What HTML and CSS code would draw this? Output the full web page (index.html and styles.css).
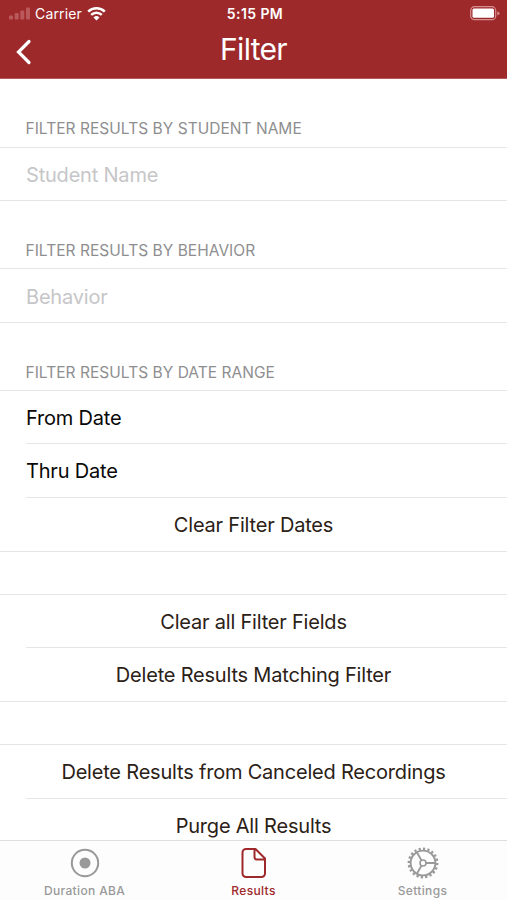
FILE: index.html
```html
<!DOCTYPE html>
<html lang="en">
<head>
<meta charset="utf-8">
<title>Filter</title>
<link rel="stylesheet" href="styles.css">
</head>
<body>
<div class="app">
  <header class="top">
    <div class="status">
      <div class="carrier">
        <svg class="signal" width="22" height="13" viewBox="0 0 22 13"><rect x="0" y="8.5" width="4" height="4" rx="1"/><rect x="5.7" y="6" width="4" height="6.500" rx="1"/><rect x="11.300" y="3.500" width="4" height="9" rx="1"/><rect x="17" y="0.500" width="4" height="12" rx="1"/></svg>
        <span class="carrier-name">Carrier</span>
        <svg class="wifi" width="19" height="15" viewBox="0 0 19 15"><g fill="none" stroke="#fff" stroke-width="2.500"><path d="M1.200 5.600A11.800 11.800 0 0 1 17.800 5.600"/><path d="M4.200 8.900A7.600 7.600 0 0 1 14.800 8.900"/></g><path d="M6.500 11.500A4.300 4.300 0 0 1 12.500 11.500L9.500 14.500Z" fill="#fff"/></svg>
      </div>
      <span class="time">5:15 PM</span>
      <svg class="battery" width="31" height="15" viewBox="0 0 31 15"><rect x="0.700" y="0.700" width="25" height="13" rx="3.800" fill="none" stroke="#d58e90" stroke-width="1.200"/><rect x="2.500" y="2.500" width="21.500" height="9.300" rx="1.500" fill="#fff"/><path d="M27.300 5.200Q29.500 6 29.500 7.300T27.300 9.400Z" fill="#d58e90"/></svg>
    </div>
    <nav class="nav">
      <svg class="back" width="18" height="26" viewBox="0 0 18 26"><path d="M14 2.500L3.500 13L14 23.500" fill="none" stroke="#fff" stroke-width="3.200" stroke-linecap="round"/></svg>
      <h1>Filter</h1>
    </nav>
  </header>
  <main class="form">
    <section>
      <h2>FILTER RESULTS BY STUDENT NAME</h2>
      <div class="rows"><div class="row hint student"><span>Student Name</span></div></div>
    </section>
    <section>
      <h2>FILTER RESULTS BY BEHAVIOR</h2>
      <div class="rows"><div class="row hint"><span>Behavior</span></div></div>
    </section>
    <section>
      <h2>FILTER RESULTS BY DATE RANGE</h2>
      <div class="rows">
        <div class="row"><span>From Date</span></div>
        <div class="row"><span>Thru Date</span></div>
        <div class="row action"><span>Clear Filter Dates</span></div>
      </div>
    </section>
    <section class="plain">
      <div class="rows">
        <div class="row action"><span>Clear all Filter Fields</span></div>
        <div class="row action"><span>Delete Results Matching Filter</span></div>
      </div>
    </section>
    <section class="plain">
      <div class="rows">
        <div class="row action"><span>Delete Results from Canceled Recordings</span></div>
        <div class="row action"><span>Purge All Results</span></div>
      </div>
    </section>
  </main>
  <footer class="tabs">
    <div class="tab">
      <svg width="32" height="32" viewBox="0 0 32 32"><circle cx="16" cy="16" r="13.200" fill="none" stroke="currentColor" stroke-width="2"/><circle cx="16" cy="16" r="5.500" fill="currentColor"/></svg>
      <span>Duration ABA</span>
    </div>
    <div class="tab active">
      <svg width="32" height="32" viewBox="0 0 32 32"><path d="M8 2H17.500L27 11.500V26.500A3.500 3.500 0 0 1 23.500 30H8A3.500 3.500 0 0 1 4.500 26.500V5.500A3.500 3.500 0 0 1 8 2ZM16.500 2.500V10A2.500 2.500 0 0 0 19 12.500H26.500" fill="none" stroke="currentColor" stroke-width="2" stroke-linejoin="round"/></svg>
      <span>Results</span>
    </div>
    <div class="tab">
      <svg width="32" height="32" viewBox="0 0 32 32"><g fill="none" stroke="currentColor"><circle cx="16" cy="16" r="14.200" stroke-width="2.400" pathLength="40" stroke-dasharray="1 1"/><circle cx="16" cy="16" r="12.400" stroke-width="1.900"/><circle cx="16" cy="16" r="3" stroke-width="1.600"/><path d="M19 16H28.500M14.500 13.400L9.800 5.200M14.500 18.600L9.800 26.800" stroke-width="1.900"/></g></svg>
      <span>Settings</span>
    </div>
  </footer>
</div>
</body>
</html>
```
FILE: styles.css
```css
* { box-sizing: border-box; }
body { margin: 0; background: #fff; font-family: Inter, "Liberation Sans", sans-serif; }
.app { height: 900px; display: grid; grid-template-rows: 79px 761px 60px; overflow: hidden; }
.top { background: #9e292b; color: #fff; border-bottom: 1px solid #b5595b; }
.status { height: 27px; padding: 0 6px 0 9px; display: grid; grid-template-columns: 1fr auto 1fr; align-items: center; font-size: 14px; }
.carrier { display: flex; align-items: center; }
.signal { fill: #b9595b; }
.carrier-name { margin: 0 5px 0 4px; letter-spacing: .15px; }
.time { font-weight: 600; font-size: 14px; letter-spacing: .4px; }
.battery { justify-self: end; }
.nav { height: 45px; display: grid; grid-template-columns: 1fr auto 1fr; align-items: center; padding: 0 15px; }
.back { margin-top: 5px; }
h1 { margin: -1px 0 0; font-size: 30px; font-weight: 400; line-height: 40px; letter-spacing: -0.7px; }
.form { overflow: hidden; }
h2 { margin: 0; height: 67px; padding: 39px 25.5px 0; font-size: 15.5px; line-height: 22px; font-weight: 400; color: #8e8e90; letter-spacing: .03px; }
section:first-child h2 { height: 68px; }
.rows { border-top: 1px solid #e6e6e8; border-bottom: 1px solid #e6e6e8; }
.row { height: 54px; margin-left: 26px; padding-top: 1px; display: flex; align-items: center; font-size: 20px; letter-spacing: -0.2px; color: #080808; }
.row:first-child { height: 52px; padding-top: 2px; }
.row + .row { border-top: 1px solid #e6e6e8; }
.row.hint { height: 53px; color: #c6c6c8; }
.row.student { height: 52px; }
.action { color: #2b2116; justify-content: center; padding-right: 26px; }
.plain { padding-top: 42px; }
.plain:last-child .row:first-child { height: 53px; padding-top: 0; }
.plain:last-child .row:last-child { height: 54px; padding-top: 0; }
.tabs { border-top: 1px solid #dedee0; background: #fdfdfd; display: grid; grid-template-columns: repeat(3, 1fr); color: #999; z-index: 1; }
.tab { display: flex; flex-direction: column; align-items: center; padding-top: 6px; font-size: 12px; font-weight: 500; line-height: 16px; letter-spacing: .35px; }
.tab span { margin-top: 4px; }
.active { color: #9e292b; }
```
